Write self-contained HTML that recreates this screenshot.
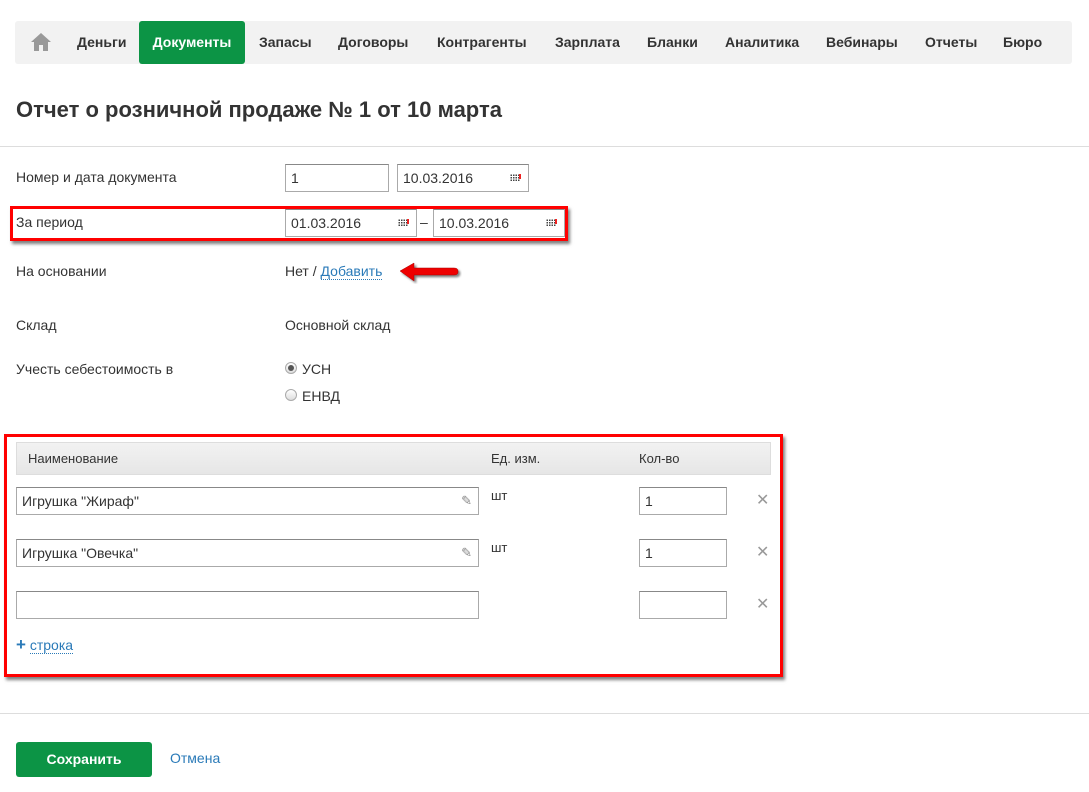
<!DOCTYPE html>
<html><head><meta charset="utf-8"><style>
*{box-sizing:border-box;margin:0;padding:0}
body{width:1089px;height:792px;background:#fff;font-family:"Liberation Sans",Arial,sans-serif;font-size:14px;color:#333;position:relative;overflow:hidden}
.a{position:absolute;white-space:nowrap}
.nav{left:15px;top:21px;width:1057px;height:43px;background:#f2f2f2;border-radius:3px}
.ni{top:21px;height:43px;line-height:43px;font-weight:bold;font-size:14px;color:#333}
.act{left:139px;width:106px;background:#0c9445;color:#fff;text-align:center;border-radius:3px}
.inp{border:1px solid #aaa;border-top-color:#888;background:#fff;height:28px;padding-left:5px;line-height:26px;font-size:14px;color:#333}
.cal{position:absolute;right:8px;top:9px;width:10px;height:8px;background:
radial-gradient(circle,#444 0.8px,transparent 1px) 0 0/2.5px 2.5px}
.cal:after{content:"";position:absolute;right:-1px;top:0;width:2px;height:5px;background:#e22}
.hr{left:0;width:1089px;height:1px;background:#ddd}
.red{border:3px solid #f00;box-shadow:2px 3px 3px rgba(0,0,0,.5)}
.x{color:#999;font-size:16px}
.rad{width:12px;height:12px;border-radius:50%;border:1px solid #aaa;background:linear-gradient(#fff,#ddd)}
</style></head><body>
<div class="a nav"></div>
<svg class="a" style="left:30px;top:32px" width="22" height="20" viewBox="0 0 22 20"><path d="M11 1L1 10h3v9h5v-6h4v6h5v-9h3z" fill="#999"/></svg>
<div class="a ni" style="left:77px">Деньги</div>
<div class="a ni act">Документы</div>
<div class="a ni" style="left:259px">Запасы</div>
<div class="a ni" style="left:338px">Договоры</div>
<div class="a ni" style="left:437px">Контрагенты</div>
<div class="a ni" style="left:555px">Зарплата</div>
<div class="a ni" style="left:647px">Бланки</div>
<div class="a ni" style="left:725px">Аналитика</div>
<div class="a ni" style="left:826px">Вебинары</div>
<div class="a ni" style="left:925px">Отчеты</div>
<div class="a ni" style="left:1003px">Бюро</div>

<div class="a" style="left:16px;top:97px;font-size:22px;font-weight:bold;color:#333">Отчет о розничной продаже № 1 от 10 марта</div>
<div class="a hr" style="top:146px"></div>

<div class="a" style="left:16px;top:169px">Номер и дата документа</div>
<div class="a inp" style="left:285px;top:164px;width:104px">1</div>
<div class="a inp" style="left:397px;top:164px;width:132px">10.03.2016<span class="cal"></span></div>

<div class="a red" style="left:10px;top:206px;width:558px;height:35px"></div>
<div class="a" style="left:16px;top:214px">За период</div>
<div class="a inp" style="left:285px;top:209px;width:132px">01.03.2016<span class="cal"></span></div>
<div class="a" style="left:420px;top:214px">–</div>
<div class="a inp" style="left:433px;top:209px;width:132px">10.03.2016<span class="cal"></span></div>

<div class="a" style="left:16px;top:263px">На основании</div>
<div class="a" style="left:285px;top:263px">Нет / <span style="color:#2a7ab8;border-bottom:1px dotted #2a7ab8">Добавить</span></div>
<svg class="a" style="left:398px;top:262px" width="64" height="22" viewBox="0 0 64 22"><path d="M2 9L16 1v5h40q4 0 4 3v1q0 3-4 3H16v6z" fill="#e00" stroke="#a00" stroke-width=".5" filter="drop-shadow(2px 2px 1px rgba(0,0,0,.5))"/></svg>

<div class="a" style="left:16px;top:317px">Склад</div>
<div class="a" style="left:285px;top:317px">Основной склад</div>

<div class="a" style="left:16px;top:361px">Учесть себестоимость в</div>
<div class="a rad" style="left:285px;top:362px"><div style="width:6px;height:6px;border-radius:50%;background:#555;margin:2px"></div></div>
<div class="a" style="left:302px;top:361px">УСН</div>
<div class="a rad" style="left:285px;top:389px"></div>
<div class="a" style="left:302px;top:388px">ЕНВД</div>

<div class="a red" style="left:4px;top:434px;width:779px;height:243px"></div>
<div class="a" style="left:16px;top:442px;width:755px;height:33px;background:linear-gradient(#f2f2f2,#e6e6e6);border:1px solid #ddd"></div>
<div class="a" style="left:28px;top:451px;font-size:13px">Наименование</div>
<div class="a" style="left:491px;top:451px;font-size:13px">Ед. изм.</div>
<div class="a" style="left:639px;top:451px;font-size:13px">Кол-во</div>

<div class="a inp" style="left:16px;top:487px;width:463px">Игрушка "Жираф"<span style="position:absolute;right:6px;top:0;color:#888;font-size:13px">✎</span></div>
<div class="a" style="left:491px;top:488px;font-size:13px">шт</div>
<div class="a inp" style="left:639px;top:487px;width:88px">1</div>
<div class="a x" style="left:756px;top:490px">✕</div>

<div class="a inp" style="left:16px;top:539px;width:463px">Игрушка "Овечка"<span style="position:absolute;right:6px;top:0;color:#888;font-size:13px">✎</span></div>
<div class="a" style="left:491px;top:540px;font-size:13px">шт</div>
<div class="a inp" style="left:639px;top:539px;width:88px">1</div>
<div class="a x" style="left:756px;top:542px">✕</div>

<div class="a inp" style="left:16px;top:591px;width:463px"></div>
<div class="a inp" style="left:639px;top:591px;width:88px"></div>
<div class="a x" style="left:756px;top:594px">✕</div>

<div class="a" style="left:16px;top:635px;color:#2a7ab8"><b style="font-size:17px">+</b> <span style="border-bottom:1px dotted #2a7ab8">строка</span></div>

<div class="a hr" style="top:713px"></div>
<div class="a" style="left:16px;top:742px;width:136px;height:35px;background:#0c9445;border-radius:3px;color:#fff;font-weight:bold;text-align:center;line-height:35px">Сохранить</div>
<div class="a" style="left:170px;top:750px;color:#2a7ab8">Отмена</div>
</body></html>
